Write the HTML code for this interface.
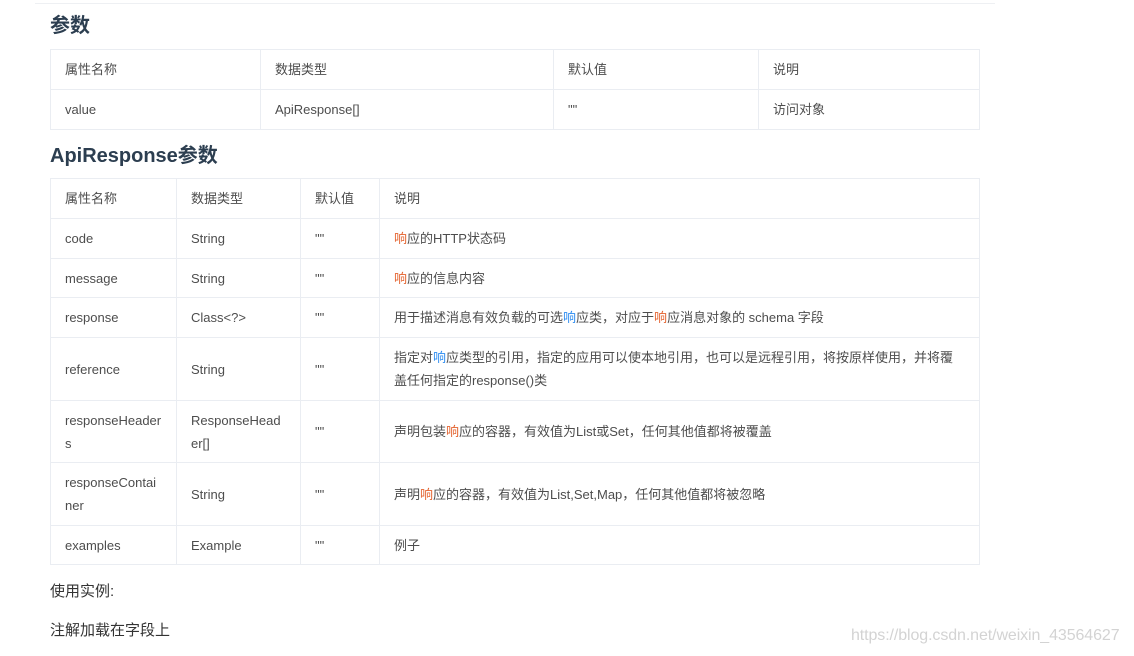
<!DOCTYPE html>
<html><head><meta charset="utf-8"><style>
body{margin:0;width:1134px;height:656px;background:#fff;font-family:"Liberation Sans","Noto Sans CJK SC",sans-serif;color:#4d4d4d;position:relative;overflow:hidden}
.topline{position:absolute;left:35px;top:3px;width:960px;height:1px;background:#eef0f3}
h2{position:absolute;left:50px;margin:0;font-size:20px;font-weight:bold;color:#2c3e50;line-height:24px}
table{position:absolute;left:50px;border-collapse:collapse;table-layout:fixed;font-size:13px}
td{border:1px solid #eaedf2;padding:0 14px;vertical-align:middle;line-height:23px;word-break:break-all}
.o{color:#e4632f}.b{color:#2d8cf0}
p{position:absolute;left:50px;margin:0;font-size:15px;color:#333}
.wm{position:absolute;left:851px;top:627px;font-size:16px;color:#d3d3d3;letter-spacing:-0.1px}
</style></head><body>
<div class="topline"></div>
<h2 style="top:14px">参数</h2>
<table style="top:49px;width:929px">
<col style="width:210px"><col style="width:293px"><col style="width:205px"><col style="width:221px">
<tr style="height:40px"><td>属性名称</td><td>数据类型</td><td>默认值</td><td>说明</td></tr>
<tr style="height:40px"><td>value</td><td>ApiResponse[]</td><td>""</td><td>访问对象</td></tr>
</table>
<h2 style="top:144px">ApiResponse参数</h2>
<table style="top:178px;width:929px">
<col style="width:126px"><col style="width:124px"><col style="width:79px"><col style="width:600px">
<tr style="height:40px"><td>属性名称</td><td>数据类型</td><td>默认值</td><td>说明</td></tr>
<tr style="height:40px"><td>code</td><td>String</td><td>""</td><td><span class="o">响</span>应的HTTP状态码</td></tr>
<tr style="height:39px"><td>message</td><td>String</td><td>""</td><td><span class="o">响</span>应的信息内容</td></tr>
<tr style="height:40px"><td>response</td><td>Class&lt;?&gt;</td><td>""</td><td>用于描述消息有效负载的可选<span class="b">响</span>应类，对应于<span class="o">响</span>应消息对象的 schema 字段</td></tr>
<tr style="height:63px"><td>reference</td><td>String</td><td>""</td><td>指定对<span class="b">响</span>应类型的引用，指定的应用可以使本地引用，也可以是远程引用，将按原样使用，并将覆盖任何指定的response()类</td></tr>
<tr style="height:62px"><td>responseHeaders</td><td>ResponseHeader[]</td><td>""</td><td>声明包装<span class="o">响</span>应的容器，有效值为List或Set，任何其他值都将被覆盖</td></tr>
<tr style="height:63px"><td>responseContainer</td><td>String</td><td>""</td><td>声明<span class="o">响</span>应的容器，有效值为List,Set,Map，任何其他值都将被忽略</td></tr>
<tr style="height:39px"><td>examples</td><td>Example</td><td>""</td><td>例子</td></tr>
</table>
<p style="top:580px">使用实例:</p>
<p style="top:619px">注解加载在字段上</p>
<div class="wm">https://blog.csdn.net/weixin_43564627</div>
</body></html>
